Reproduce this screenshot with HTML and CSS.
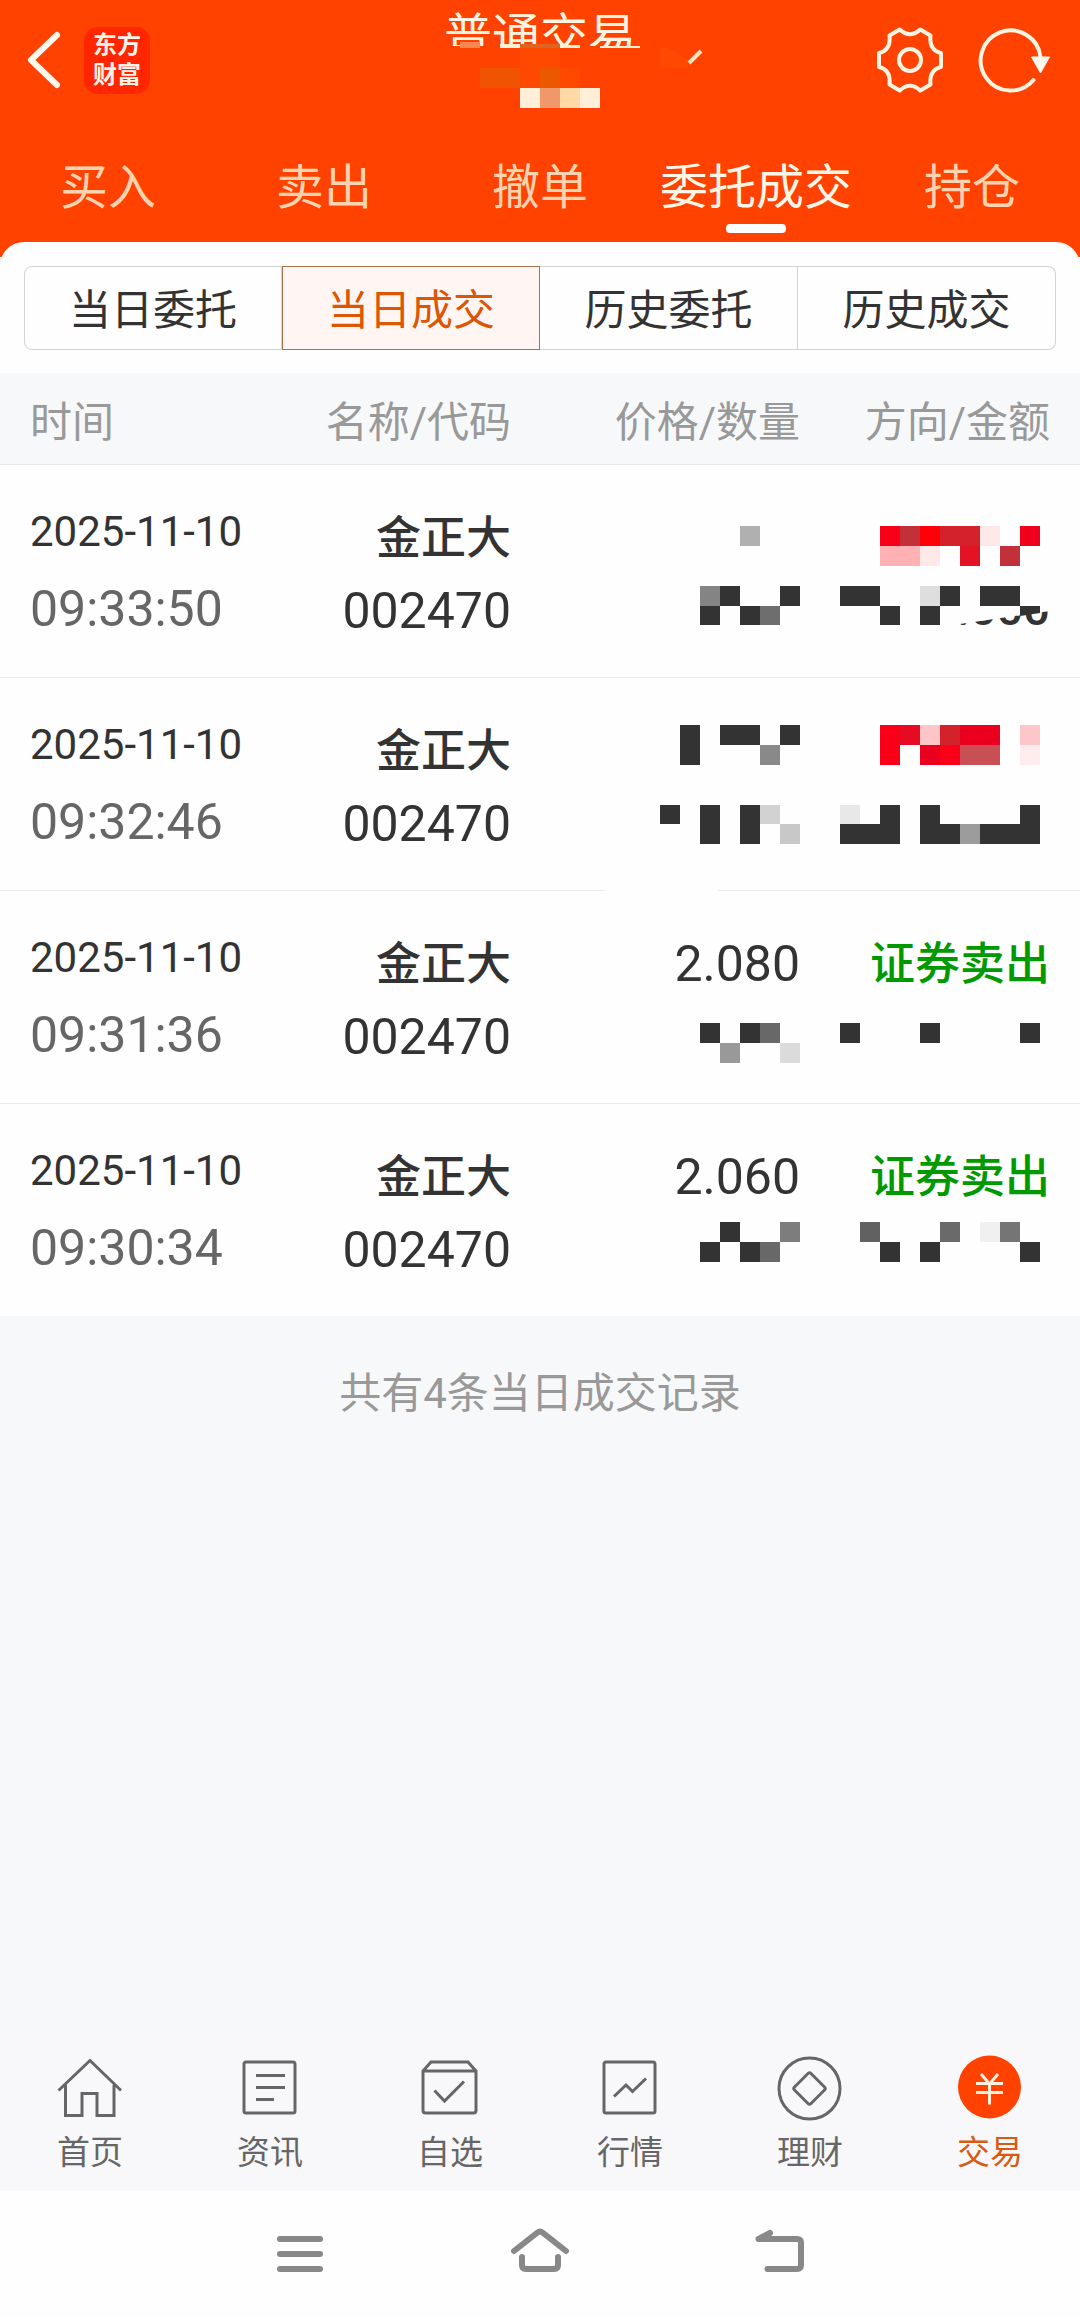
FILE: index.html
```html
<!DOCTYPE html>
<html lang="zh-CN">
<head>
<meta charset="utf-8">
<meta name="viewport" content="width=device-width">
<title>普通交易</title>
<link rel="stylesheet" href="styles.css">
</head>
<body>
<div class="app">
  <header class="header">
    <div class="topbar">
      <div class="topbar-left">
        <button class="icon-btn" aria-label="返回">
          <svg width="38" height="60" viewBox="0 0 38 60" fill="none" stroke="#fff8ee" stroke-width="6" stroke-linecap="round" stroke-linejoin="round"><path d="M33 5 7 30 33 55"/></svg>
        </button>
        <a class="logo" href="#">东方<br>财富</a>
      </div>
      <div class="account">
        <h1 class="title">普通交易</h1>
        <svg class="account-mask" width="360" height="66" viewBox="0 0 360 66" aria-hidden="true">
          <path fill="#ff4200" d="M0 4h360v62H0z"/>
          <path fill="#ff8650" d="M100 0h20v6h-20z"/>
          <path fill="#fff0d8" d="M140 2h20v4h-20zM200 3h20v3h-20zM240 4h40v2h-40z"/>
          <path fill="#dc661f" d="M160 2h40v4h-40z"/>
          <path fill="#ff4900" d="M160 6h40v20h-40zM300 6h8l20 12v8h-28zM160 26h20v20h-20zM200 26h20v20h-20z"/>
          <path fill="#f05400" d="M120 26h40v20h-40z"/>
          <path fill="#eb5800" d="M180 26h20v20h-20z"/>
          <path fill="#ffefd8" d="M160 46h20v20h-20zM220 46h20v20h-20z"/>
          <path fill="#f0986a" d="M180 46h20v20h-20z"/>
          <path fill="#ffd8a6" d="M200 46h20v20h-20z"/>
          <path d="M329 21 341 9" stroke="#ffe4c4" stroke-width="4"/>
        </svg>
      </div>
      <div class="topbar-right">
        <button class="icon-btn" aria-label="设置">
          <svg width="68" height="68" viewBox="-34 -34 68 68" fill="none" stroke="#fff3e2" stroke-width="4" stroke-linejoin="round"><path d="M-10.3-30.5Q0-21 10.3-30.5L20.5-24.5Q19-9.7 31-7V7Q19 9.7 20.5 24.5L10.3 30.5Q0 21-10.3 30.5L-20.5 24.5Q-19 9.7-31 7V-7Q-19-9.7-20.5-24.5Z"/><circle r="11"/></svg>
        </button>
        <button class="icon-btn" aria-label="刷新">
          <svg width="76" height="68" viewBox="0 0 76 68"><path d="M57.5 54A30 30 0 1 1 64.500 31" fill="none" stroke="#fff3e2" stroke-width="4" stroke-linecap="round"/><path d="M55.500 31h18L64.500 47z" fill="#fff8ee" stroke="#fff8ee" stroke-linejoin="round"/></svg>
        </button>
      </div>
    </div>
    <nav class="tabs">
      <a href="#">买入</a>
      <a href="#">卖出</a>
      <a href="#">撤单</a>
      <a href="#" class="active" aria-current="page">委托成交</a>
      <a href="#">持仓</a>
    </nav>
  </header>

  <main class="sheet-wrap">
    <div class="sheet">
      <div class="segments">
        <button>当日委托</button>
        <button class="active">当日成交</button>
        <button>历史委托</button>
        <button>历史成交</button>
      </div>
    </div>
    <table class="records">
      <colgroup><col><col class="col-name"><col class="col-price"><col class="col-side"></colgroup>
      <thead>
        <tr><th>时间</th><th>名称/代码</th><th>价格/数量</th><th>方向/金额</th></tr>
      </thead>
      <tbody>
        <tr>
          <td><div class="date">2025-11-10</div><div class="time">09:33:50</div></td>
          <td><div class="top">金正大</div><div class="bottom">002470</div></td>
          <td>
            <svg class="mask" width="140" height="72"><path fill="#b0b0b0" d="M80 25h20v20h-20z"/></svg>
            <svg class="mask" width="140" height="74"><path fill="#333" d="M60 13h20v20h-20zM120 13h20v20h-20zM40 33h20v19h-20zM80 33h20v19h-20z"/><path fill="#848484" d="M40 13h20v20h-20z"/><path fill="#6e6e6e" d="M100 33h20v19h-20z"/></svg>
          </td>
          <td>
            <svg class="mask" width="220" height="72"><path fill="#f70018" d="M50 25h20v20h-20z"/><path fill="#c2303a" d="M70 25h20v20h-20zM170 45h20v20h-20z"/><path fill="#ff0008" d="M90 25h20v20h-20z"/><path fill="#d4222d" d="M110 25h40v20h-40z"/><path fill="#ffe8e8" d="M150 25h20v20h-20zM90 45h20v20h-20z"/><path fill="#f0001c" d="M190 25h20v20h-20z"/><path fill="#ffb1b4" d="M50 45h40v20h-40z"/><path fill="#e21324" d="M130 45h20v20h-20z"/></svg>
            <svg class="mask" width="220" height="74"><defs><clipPath id="rest"><path d="M130 51 220 38V60H130z"/></clipPath></defs><path fill="#333" d="M10 13h40v20h-40zM110 13h20v20h-20zM150 13h40v20h-40zM50 33h20v19h-20zM90 33h20v19h-20zM190 33h20v7l-20 3z"/><path fill="#dedede" d="M90 13h20v20h-20z"/><text class="rest" x="220" y="52" text-anchor="end" clip-path="url(#rest)">.000</text></svg>
          </td>
        </tr>
        <tr>
          <td><div class="date">2025-11-10</div><div class="time">09:32:46</div></td>
          <td><div class="top">金正大</div><div class="bottom">002470</div></td>
          <td class="rule-gap">
            <svg class="mask" width="140" height="72"><path fill="#333" d="M20 11h20v40h-20zM60 11h40v20h-40zM120 11h20v20h-20z"/><path fill="#898989" d="M100 31h20v20h-20z"/></svg>
            <svg class="mask" width="140" height="74"><path fill="#333" d="M0 19h20v19h-20zM40 19h20v39h-20zM80 19h20v39h-20z"/><path fill="#d2d2d2" d="M100 19h20v19h-20z"/><path fill="#c8c8c8" d="M120 38h20v20h-20z"/></svg>
          </td>
          <td>
            <svg class="mask" width="220" height="72"><path fill="#fa0018" d="M50 11h20v40h-20zM110 31h20v20h-20z"/><path fill="#e60a23" d="M70 11h20v20h-20z"/><path fill="#ffc6c9" d="M90 11h20v20h-20zM190 11h20v20h-20z"/><path fill="#d4222d" d="M110 11h20v20h-20z"/><path fill="#ea001e" d="M130 11h40v20h-40zM90 31h20v20h-20z"/><path fill="#c85054" d="M130 31h40v20h-40z"/><path fill="#ffecec" d="M190 31h20v20h-20z"/></svg>
            <svg class="mask" width="220" height="74"><path fill="#333" d="M50 19h20v19h-20zM90 19h20v19h-20zM190 19h20v19h-20zM10 38h60v20h-60zM90 38h40v20h-40zM150 38h60v20h-60z"/><path fill="#e8e8e8" d="M10 19h20v19h-20z"/><path fill="#9c9c9c" d="M130 38h20v20h-20z"/></svg>
          </td>
        </tr>
        <tr>
          <td><div class="date">2025-11-10</div><div class="time">09:31:36</div></td>
          <td><div class="top">金正大</div><div class="bottom">002470</div></td>
          <td>
            <div class="top price">2.080</div>
            <svg class="mask" width="140" height="74"><path fill="#333" d="M40 24h20v20h-20zM80 24h20v20h-20z"/><path fill="#686868" d="M100 24h20v20h-20z"/><path fill="#999" d="M60 44h20v20h-20z"/><path fill="#dbdbdb" d="M120 44h20v20h-20z"/></svg>
          </td>
          <td>
            <div class="top sell">证券卖出</div>
            <svg class="mask" width="220" height="74"><path fill="#333" d="M10 24h20v20h-20zM90 24h20v20h-20zM190 24h20v20h-20z"/></svg>
          </td>
        </tr>
        <tr>
          <td><div class="date">2025-11-10</div><div class="time">09:30:34</div></td>
          <td><div class="top">金正大</div><div class="bottom">002470</div></td>
          <td>
            <div class="top price">2.060</div>
            <svg class="mask" width="140" height="74"><path fill="#333" d="M60 10h20v20h-20zM40 30h20v20h-20zM80 30h20v20h-20z"/><path fill="#7d7d7d" d="M120 10h20v20h-20z"/><path fill="#686868" d="M100 30h20v20h-20z"/></svg>
          </td>
          <td>
            <div class="top sell">证券卖出</div>
            <svg class="mask" width="220" height="74"><path fill="#616161" d="M30 10h20v20h-20z"/><path fill="#6a6a6a" d="M110 10h20v20h-20z"/><path fill="#f0f0f0" d="M150 10h20v20h-20z"/><path fill="#757575" d="M170 10h20v20h-20z"/><path fill="#333" d="M50 30h20v20h-20zM90 30h20v20h-20zM190 30h20v20h-20z"/></svg>
          </td>
        </tr>
      </tbody>
    </table>
    <p class="summary">共有4条当日成交记录</p>
  </main>

  <nav class="bottom-nav">
    <a href="#"><svg viewBox="0 0 72 72"><path d="M4.500 38.500 36 8.500 67 38.500M11.500 33V63.500H28V41.500H43V63.500H60V33"/></svg>首页</a>
    <a href="#"><svg viewBox="0 0 72 72"><rect x="10" y="10" width="51" height="51" rx="2"/><path d="M22 23.500H51M22 35.500H51M22 47.500H40"/></svg>资讯</a>
    <a href="#"><svg viewBox="0 0 72 72"><path d="M9 19 17 10H54L62 19V58.500Q62 61 59.500 61H11.500Q9 61 9 58.500ZM9 19H62M20.500 38.500 30.500 49 50 29.500"/></svg>自选</a>
    <a href="#"><svg viewBox="0 0 72 72"><rect x="10" y="10" width="51" height="51" rx="2"/><path d="M20 44.500 32 33 38.500 39.500 52 26.500"/></svg>行情</a>
    <a href="#"><svg viewBox="0 0 72 72"><circle cx="35.500" cy="36.500" r="30.500"/><path d="M34 21.500 20.500 35Q19 36.500 20.500 38L34 51.500Q35.500 53 37 51.500L50.500 38Q52 36.500 50.500 35L37 21.500Q35.500 20 34 21.500Z"/></svg>理财</a>
    <a href="#" class="active" aria-current="page"><svg viewBox="0 0 72 72"><circle cx="35.500" cy="35" r="31.500" fill="#ff4200" stroke="none"/><path stroke="#fff0dc" d="M27 22 35.500 32 44 22M22 31.500H49M22 40.500H49M35.500 32V52.500"/></svg>交易</a>
  </nav>
  <div class="system-bar">
    <button class="icon-btn" aria-label="最近任务"><svg viewBox="0 0 60 60"><path d="M10 15H50M10 30H50M10 45H50"/></svg></button>
    <button class="icon-btn" aria-label="主屏幕"><svg viewBox="0 0 60 60"><path d="M4 27 27.500 8.500Q30 6.500 32.500 8.500L56 27M12 33V41Q12 45 16 45H44Q48 45 48 41V33"/></svg></button>
    <button class="icon-btn" aria-label="返回上一页"><svg viewBox="0 0 60 60"><path d="M20 9 8.500 15H47Q51 15 51 19V41Q51 45 47 45H17.500"/></svg></button>
  </div>
</div>
</body>
</html>
```
FILE: styles.css
```css
* { box-sizing: border-box; }

body {
  margin: 0;
  background: #f7f8fa;
  color: #333;
  font-family: Roboto, "Noto Sans CJK SC", sans-serif;
}

a { color: inherit; text-decoration: none; }

button {
  font: inherit;
  color: inherit;
  padding: 0;
  border: 0;
  background: none;
}

svg { display: block; }

.app {
  display: flex;
  flex-direction: column;
  min-height: 100vh;
}

/* Header */
.header { background: #ff4200; }

.topbar {
  display: grid;
  grid-template-columns: 1fr auto 1fr;
  height: 120px;
}

.topbar-left {
  display: flex;
  align-items: center;
  gap: 22px;
  padding-left: 24px;
}

.topbar-right {
  display: flex;
  align-items: center;
  justify-content: flex-end;
  gap: 32px;
  padding-right: 28px;
}

.logo {
  width: 66px;
  height: 67px;
  padding-top: 3px;
  border-radius: 14px;
  background: #ff2600;
  color: #fff4ea;
  font-size: 24px;
  font-weight: 700;
  line-height: 30px;
  text-align: center;
}

.title {
  margin: 0;
  color: #fff3e2;
  font-size: 48px;
  font-weight: 400;
  line-height: 74px;
  text-align: center;
}

/* The masked account name sits over the lower part of the title */
.account-mask {
  position: relative;
  margin-top: -32px;
}

.tabs {
  display: grid;
  grid-template-columns: repeat(5, 1fr);
  height: 122px;
  color: #ffd3b0;
  font-size: 48px;
  line-height: 72px;
  text-align: center;
}

.tabs a {
  display: flex;
  flex-direction: column;
  align-items: center;
  padding-top: 32px;
}

.tabs .active { color: #fff6e8; }

.tabs .active::after {
  content: "";
  width: 60px;
  height: 9px;
  border-radius: 4px;
  background: #fff;
}

/* Sheet with its segmented control */
.sheet-wrap { background: linear-gradient(#ff4200 15px, #f7f8fa 15px); }

.sheet {
  padding: 24px 24px 23px;
  border-radius: 24px 24px 0 0;
  background: #fefefe;
}

.segments {
  display: grid;
  grid-template-columns: repeat(4, 1fr);
  font-size: 42px;
}

.segments button {
  height: 84px;
  padding-bottom: 3px;
  border: 1px solid #d0d5d6;
  border-left-width: 0;
}

.segments button:first-child {
  border-left-width: 1px;
  border-radius: 8px 0 0 8px;
}

.segments button:last-child { border-radius: 0 8px 8px 0; }

.segments .active {
  border: 1px solid #a8704c;
  background: #fff5f2;
  color: #dc5606;
}

/* Records */
.records {
  width: 100%;
  border-collapse: separate;
  border-spacing: 0;
  table-layout: fixed;
  background: #fefefe;
}

.col-name { width: 241px; }
.col-price { width: 289px; }
.col-side { width: 280px; }

.records th {
  height: 92px;
  padding: 0;
  border-bottom: 1px solid #e8eaec;
  background: #f7f8fa;
  color: #999;
  font-size: 42px;
  font-weight: 400;
  text-align: right;
}

.records td {
  height: 213px;
  padding: 36px 0 0;
  border-bottom: 1px solid #ebebed;
  text-align: right;
  vertical-align: top;
}

.records tr > :first-child { padding-left: 30px; text-align: left; }
.records tr > :last-child { padding-right: 30px; }

.records tbody tr:last-child td { border-bottom-color: #f7f8fa; }

.date {
  font-size: 42px;
  line-height: 62px;
}

.time {
  color: #666;
  font-size: 50px;
  line-height: 92px;
}

.top {
  height: 72px;
  font-size: 45px;
  font-weight: 500;
  line-height: 75px;
}

.bottom {
  font-size: 50px;
  line-height: 76px;
}

.price {
  font-size: 50px;
  font-weight: 400;
}

.sell { color: #009a00; }

.mask { margin-left: auto; }

.rest {
  fill: #333;
  font-size: 47px;
  font-weight: 500;
}

.rule-gap { position: relative; }

.rule-gap::after {
  content: "";
  position: absolute;
  right: 82px;
  bottom: -1px;
  width: 113px;
  height: 1px;
  background: #fefefe;
}

.summary {
  margin: 0;
  padding-top: 45px;
  color: #999;
  font-size: 42px;
  line-height: 64px;
  text-align: center;
}

/* Bottom navigation */
.bottom-nav {
  display: grid;
  grid-template-columns: repeat(6, 1fr);
  height: 157px;
  margin-top: auto;
  padding-top: 18px;
  background: #f8f8fb;
  color: #666;
  font-size: 33px;
  line-height: 48px;
}

.bottom-nav a {
  display: flex;
  flex-direction: column;
  align-items: center;
  gap: 5px;
}

.bottom-nav svg {
  width: 72px;
  height: 72px;
  fill: none;
  stroke: #666;
  stroke-width: 3;
}

.bottom-nav .active { color: #d95a12; }

.system-bar {
  display: flex;
  align-items: center;
  justify-content: center;
  gap: 180px;
  height: 126px;
  background: #fefefe;
}

.system-bar svg {
  width: 60px;
  height: 60px;
  fill: none;
  stroke: #888;
  stroke-width: 6;
  stroke-linecap: round;
  stroke-linejoin: round;
}
```
